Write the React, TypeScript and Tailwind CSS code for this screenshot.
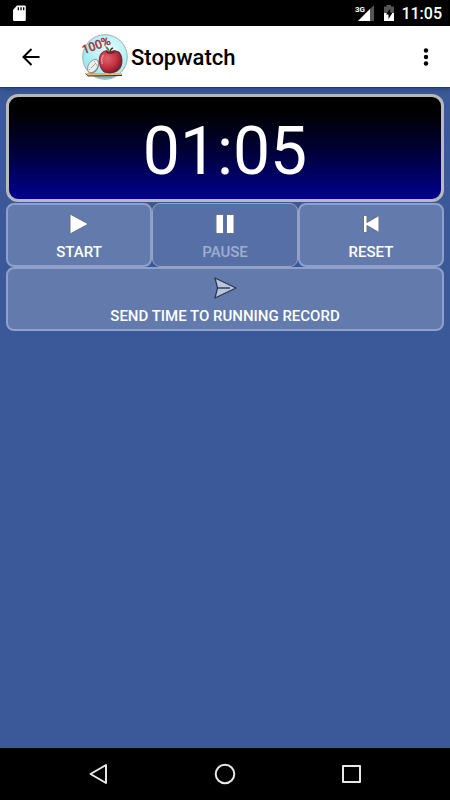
import React from "react";

function StatusBar() {
  return (
    <div className="flex h-[26px] shrink-0 items-center justify-between bg-black pr-2 pl-3 text-white">
      <svg width="15" height="18" viewBox="0 0 15 18" aria-hidden="true">
        <path d="M5 1.500h7.500q1.300 0 1.300 1.300v13q0 1.300-1.300 1.300H2.300Q1 17.100 1 15.800V6z" fill="#fff" />
        <path d="M6.300 3.200v3M9 3.200v3M11.700 3.200v3" stroke="#000" strokeWidth="1.300" />
      </svg>
      <div className="flex items-center">
        <svg width="20" height="18" viewBox="0 0 20 18" aria-hidden="true">
          <path d="M19 1v16H3z" fill="#555" />
          <path d="M15 5v12H3z" fill="#fff" />
          <text x="0" y="8" fontFamily="Roboto, sans-serif" fontSize="8" fontWeight="700" fill="#fff" stroke="#000" strokeWidth="2" paintOrder="stroke">
            3G
          </text>
        </svg>
        <svg className="ml-2" width="12" height="18" viewBox="0 0 12 18" aria-hidden="true">
          <path d="M3.500 1h4.500v1.500H11V9H1V2.500h2.500z" fill="#555" />
          <path d="M1 9h10v8H1z" fill="#fff" />
          <path d="M7.200 4.500L3 10.500h2.500V15L9.500 8.700H7.200z" fill="#000" />
        </svg>
        <time className="ml-1.5 pt-0.5 text-base leading-5 font-medium">11:05</time>
      </div>
    </div>
  );
}

function Logo() {
  return (
    <svg width="48" height="48" viewBox="0 0 48 48" aria-hidden="true">
      <defs>
        <radialGradient id="sky" cx="0.6" cy="0.35" r="0.65">
          <stop offset="0" stopColor="#e6fdfe" />
          <stop offset="1" stopColor="#96e9f0" />
        </radialGradient>
        <radialGradient id="apple" cx="0.35" cy="0.35" r="0.7">
          <stop offset="0" stopColor="#e0606b" />
          <stop offset="0.55" stopColor="#c63446" />
          <stop offset="1" stopColor="#7e1622" />
        </radialGradient>
      </defs>
      <circle cx="24" cy="24" r="22.300" fill="url(#sky)" stroke="#a3adaf" strokeWidth="1" />
      <path d="M10 42Q24 49 38 42z" fill="#7fb4b9" />
      <path d="M4 40.500l37 .5v2l-34 .5z" fill="#3c3028" />
      <path d="M4 40l37 .3v1.700l-34 .5z" fill="#e7b565" />
      <ellipse cx="12.500" cy="33.500" rx="5" ry="7.800" transform="rotate(32 12.500 33.500)" fill="#8c8c8c" />
      <ellipse cx="12" cy="33" rx="4.600" ry="7.300" transform="rotate(32 12 33)" fill="#eceded" stroke="#777" strokeWidth="0.600" />
      <path d="M12 33l3-3M12 33l-2 2M14 28l-1 1M8 37l1-1M16 32l-1 0" stroke="#8a8a8a" strokeWidth="0.800" />
      <path d="M29 19Q25 16 20.500 20C16 26 19 36 23 39Q29 41 34 39C42 37 43 24 38 19Q33 16 29 19" fill="url(#apple)" stroke="#641a20" strokeWidth="0.800" />
      <path d="M22.500 22Q19.500 26 21.500 31" fill="none" stroke="#ef929a" strokeWidth="1.300" />
      <path d="M25 18.500Q29 22 34 18.500" fill="none" stroke="#66151c" strokeWidth="1.200" />
      <path d="M29 20Q29 16 32 15" fill="none" stroke="#453521" strokeWidth="1.500" />
      <path d="M28.500 19Q24.500 16 24 13Q28.500 14 28.500 19" fill="#518948" />
      <text x="3" y="21" transform="rotate(-20 3 21)" fontFamily="Roboto, sans-serif" fontSize="12" fill="#c9252e" stroke="#92252e" strokeWidth="0.400">
        100%
      </text>
    </svg>
  );
}

function AppHeader() {
  return (
    <header className="z-10 flex h-[61px] shrink-0 items-center bg-white pr-3 shadow-[0_1px_0_#12407c,0_2px_5px_rgba(20,45,100,0.55)]">
      <button type="button" aria-label="Back" className="flex h-12 w-[61px] items-center justify-center">
        <svg width="20" height="20" viewBox="0 0 20 20" fill="none" stroke="#000" strokeWidth="2" aria-hidden="true">
          <path d="M18.500 10H3M10.500 2L2.500 10l8 8" />
        </svg>
      </button>
      <div className="ml-5 flex items-center">
        <Logo />
        <h1 className="ml-0.5 pt-0.5 text-[22px] leading-7 font-medium text-black">Stopwatch</h1>
      </div>
      <button type="button" aria-label="More options" className="ml-auto flex h-12 w-6 items-center justify-center">
        <svg width="6" height="20" viewBox="0 0 6 20" fill="#000" aria-hidden="true">
          <circle cx="3" cy="3.500" r="2.200" />
          <circle cx="3" cy="10" r="2.200" />
          <circle cx="3" cy="16.500" r="2.200" />
        </svg>
      </button>
    </header>
  );
}

function PadButton({ label, disabled, children }: { label: string; disabled?: boolean; children: React.ReactNode }) {
  return (
    <button
      type="button"
      disabled={disabled}
      className="flex h-16 w-full min-w-0 flex-col items-center rounded-lg border-2 border-[#8fa1ca] bg-[#627bac] pt-[7px] text-[15px] leading-5 font-medium text-white disabled:border disabled:border-[#9aa3b8] disabled:bg-[#566fa7] disabled:pt-2 disabled:text-[#a0aecd]"
    >
      <svg className="mb-1.5 shrink-0" width="24" height="24" viewBox="0 0 24 24" aria-hidden="true">
        {children}
      </svg>
      {label}
    </button>
  );
}

function Stopwatch() {
  return (
    <main className="flex-1 bg-[#3b5998] px-1.5 pt-[7px]">
      <output className="flex h-[108px] items-center justify-center rounded-xl border-3 border-[#b9b9b9] bg-linear-to-b from-black to-[#000090] pt-2 text-[66px] leading-none text-white">
        01:05
      </output>
      <div className="grid grid-cols-3 pt-px">
        <PadButton label="START">
          <path d="M3 2v20l18.500-10z" fill="#fff" stroke="#687489" strokeWidth="1" />
        </PadButton>
        <PadButton label="PAUSE" disabled>
          <path d="M3 2.500h7.500v19H3zM13.500 2.500H21v19h-7.500z" fill="#fff" stroke="#687489" strokeWidth="1" />
        </PadButton>
        <PadButton label="RESET">
          <path d="M4.500 3.500h3.500v7L20 3.500v17L8 13.500v7H4.500z" fill="#fff" stroke="#687489" strokeWidth="1" />
        </PadButton>
      </div>
      <PadButton label="SEND TIME TO RUNNING RECORD">
        <path d="M2 2L23 12L2 22L4.500 12z" fill="#b8c5dd" stroke="#26364f" strokeWidth="1.200" strokeLinejoin="round" />
        <path d="M4.500 12H17" stroke="#26364f" strokeWidth="1.400" />
      </PadButton>
    </main>
  );
}

function NavigationBar() {
  return (
    <nav className="flex h-[52px] shrink-0 items-center justify-center gap-[102px] bg-black text-[#e8e8e8]">
      <button type="button" aria-label="Back">
        <svg width="24" height="24" viewBox="0 0 24 24" fill="none" stroke="currentColor" strokeWidth="2" strokeLinejoin="round" aria-hidden="true">
          <path d="M19 3v18L3.500 12z" />
        </svg>
      </button>
      <button type="button" aria-label="Home">
        <svg width="24" height="24" viewBox="0 0 24 24" fill="none" stroke="currentColor" strokeWidth="2" aria-hidden="true">
          <circle cx="12" cy="12" r="9.300" />
        </svg>
      </button>
      <button type="button" aria-label="Recent apps">
        <svg width="24" height="24" viewBox="0 0 24 24" fill="none" stroke="currentColor" strokeWidth="2" strokeLinejoin="round" aria-hidden="true">
          <path d="M4 4h17v16H4z" />
        </svg>
      </button>
    </nav>
  );
}

export default function App() {
  return (
    <div className="flex min-h-screen flex-col bg-[#3b5998] font-[Roboto,sans-serif]">
      <StatusBar />
      <AppHeader />
      <Stopwatch />
      <NavigationBar />
    </div>
  );
}
